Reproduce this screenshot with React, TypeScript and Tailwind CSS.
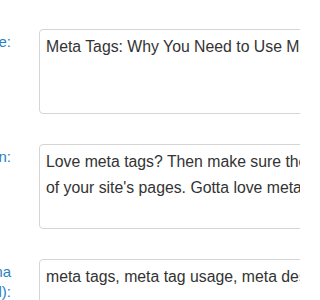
import React from 'react';

interface FieldProps {
  label: React.ReactNode;
  value: string;
}

function Field({ label, value }: FieldProps) {
  return (
    <div className="flex items-start">
      <label className="w-[300px] -ml-[289px] shrink-0 pt-[3px] text-right text-[15px] leading-[20px] text-[#2b7fc2] whitespace-nowrap">
        {label}
      </label>
      <textarea
        readOnly
        defaultValue={value}
        className="ml-[28px] w-[620px] h-[85px] shrink-0 resize-none rounded-[4px] border border-[#d5d5d5] bg-white px-[6px] py-[4px] text-[15.8px] leading-[26px] text-[#333] outline-none font-['Liberation_Sans',Arial,sans-serif]"
      />
    </div>
  );
}

export default function App() {
  return (
    <div className="w-[300px] h-[300px] overflow-hidden bg-white font-['Liberation_Sans',Arial,sans-serif]">
      <div className="flex flex-col gap-[30px] pt-[29px]">
        <Field label="Meta Title:" value="Meta Tags: Why You Need to Use Meta Tags on Your Site" />
        <Field
          label="Meta Description:"
          value={"Love meta tags? Then make sure they're on each and every one\nof your site's pages. Gotta love meta tags!"}
        />
        <Field
          label={
            <>
              Keywords, separated by comma
              <br />
              (optional):
            </>
          }
          value="meta tags, meta tag usage, meta descriptions, meta keywords"
        />
      </div>
    </div>
  );
}
